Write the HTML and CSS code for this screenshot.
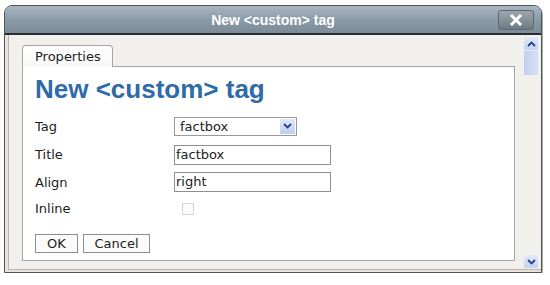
FILE: index.html
```html
<!DOCTYPE html>
<html lang="en">
<head>
    <meta charset="UTF-8">
    <title>New &lt;custom&gt; tag</title>
    <link rel="stylesheet" href="styles.css">
</head>
<body>
    <div class="window">
        <!-- Title bar -->
        <div class="titlebar">
            <span>New &lt;custom&gt; tag</span>
            <div class="close">
                <svg width="14" height="12" viewBox="0 0 14 12"><path d="M2 1 L12 11 M12 1 L2 11" stroke="#fff" stroke-width="3"/></svg>
            </div>
        </div>

        <div class="body">
            <div class="main">
                <div class="tab">Properties</div>
                <div class="panel">
                    <h1>New &lt;custom&gt; tag</h1>
                    <div class="form">
                        <label>Tag</label>
                        <div class="select">
                            <span>factbox</span>
                            <span class="arrow">
                                <svg width="9" height="6" viewBox="0 0 9 6"><path d="M1 1 L4.5 4.5 L8 1" fill="none" stroke="#24408a" stroke-width="1.8"/></svg>
                            </span>
                        </div>
                        <label>Title</label>
                        <div class="input">factbox</div>
                        <label>Align</label>
                        <div class="input">right</div>
                        <label>Inline</label>
                        <div class="check"></div>
                    </div>
                    <div class="buttons">
                        <button class="btn-ok">OK</button>
                        <button class="btn-cancel">Cancel</button>
                    </div>
                </div>
            </div>

            <!-- Scrollbar -->
            <div class="scroll">
                <div class="sb-btn">
                    <svg width="9" height="6" viewBox="0 0 9 6"><path d="M1 5 L4.5 1.5 L8 5" fill="none" stroke="#24408a" stroke-width="1.8"/></svg>
                </div>
                <div class="sb-thumb"></div>
                <div class="sb-track"></div>
                <div class="sb-btn">
                    <svg width="9" height="6" viewBox="0 0 9 6"><path d="M1 1 L4.5 4.5 L8 1" fill="none" stroke="#24408a" stroke-width="1.8"/></svg>
                </div>
            </div>
        </div>
    </div>
</body>
</html>
```

FILE: styles.css
```css
body { margin: 0; background: #fff; font-family: "DejaVu Sans", Verdana, sans-serif; font-size: 13px; color: #222; }

.window {
    margin: 5px 0 0 4px;
    width: 536px;
    height: 266px;
    border: 1px solid #4f5459;
    border-radius: 8px 8px 0 0;
    background: #f1f0ec;
    box-shadow: 1px 2px 0 #a9a9a9;
    display: flex;
    flex-direction: column;
    overflow: hidden;
}

.titlebar {
    height: 27px;
    flex: none;
    position: relative;
    display: flex;
    align-items: center;
    justify-content: center;
    background: linear-gradient(#a9b7c2, #8a9aa7 50%, #7b8b98);
    border-bottom: 2px solid #2a2e33;
    color: #fff;
    font-family: "Liberation Sans", Arial, sans-serif;
    font-weight: bold;
    font-size: 14px;
}

.close {
    position: absolute;
    right: 7px;
    top: 4px;
    width: 34px;
    height: 18px;
    border: 1px solid #5d666d;
    border-radius: 3px;
    background: linear-gradient(#9ba6ae, #6f7b83);
    display: flex;
    align-items: center;
    justify-content: center;
}

.body {
    flex: 1;
    display: flex;
    border-left: 3px solid #ece4dc;
    border-bottom: 2px solid #e6e2dc;
    box-shadow: inset 1px 0 0 #b9b4ae, inset 0 -1px 0 #b9b4ae;
}

.main { flex: 1; padding: 10px 5px 0 14px; }

.tab {
    width: 77px;
    height: 21px;
    padding-left: 12px;
    line-height: 22px;
    border: 1px solid #a5a5a5;
    border-bottom: none;
    border-radius: 4px 4px 0 0;
    background: linear-gradient(#fff, #f7f7f5);
    position: relative;
    z-index: 1;
    margin-bottom: -1px;
}

.panel {
    width: 467px;
    height: 193px;
    padding: 0 12px;
    border: 1px solid #a5a5a5;
    background: #fff;
}

h1 {
    margin: 7px 0 0;
    line-height: 30px;
    font-family: "Liberation Sans", Arial, sans-serif;
    font-size: 26px;
    font-weight: bold;
    color: #2e6ba8;
}

.form {
    margin-top: 8px;
    display: grid;
    grid-template-columns: 139px 1fr;
    grid-template-rows: 28px 29px 26px 27px;
    align-items: center;
}

.select {
    border: 1px solid #9a9a9a;
    display: flex;
    align-items: center;
    justify-content: space-between;
    padding-left: 5px;
    box-sizing: border-box;
    width: 123px;
    height: 19px;
}

.arrow {
    width: 15px;
    height: 15px;
    margin-right: 1px;
    background: linear-gradient(#dfe7f8, #bfcdee);
    display: flex;
    align-items: center;
    justify-content: center;
}

.input {
    width: 154px;
    height: 18px;
    line-height: 18px;
    border: 1px solid #8f8f8f;
    padding-left: 1px;
}

.check {
    width: 10px;
    height: 10px;
    margin-left: 8px;
    border: 1px solid #d4d4d4;
    background: #fbfbfb;
}

.buttons { margin-top: 12px; display: flex; gap: 5px; }

button {
    height: 19px;
    padding: 0;
    border: 1px solid #8d8d8d;
    background: #fbfbfa;
    font-family: "DejaVu Sans", Verdana, sans-serif;
    font-size: 13px;
    color: #222;
}
.btn-ok { width: 43px; }
.btn-cancel { width: 67px; }

.scroll {
    width: 16px;
    margin: 2px 3px 0 4px;
    display: flex;
    flex-direction: column;
    align-items: center;
}

.sb-btn {
    width: 14px;
    height: 13px;
    background: linear-gradient(#e3eaf8, #c4d2f0);
    display: flex;
    align-items: center;
    justify-content: center;
}

.sb-thumb {
    width: 14px;
    height: 24px;
    background: linear-gradient(90deg, #c2d0ee, #d6e0f5);
    border-top: 1px solid #e8eef9;
}

.sb-track { flex: 1; }
.scroll .sb-btn:last-child { margin-bottom: 2px; }
```
